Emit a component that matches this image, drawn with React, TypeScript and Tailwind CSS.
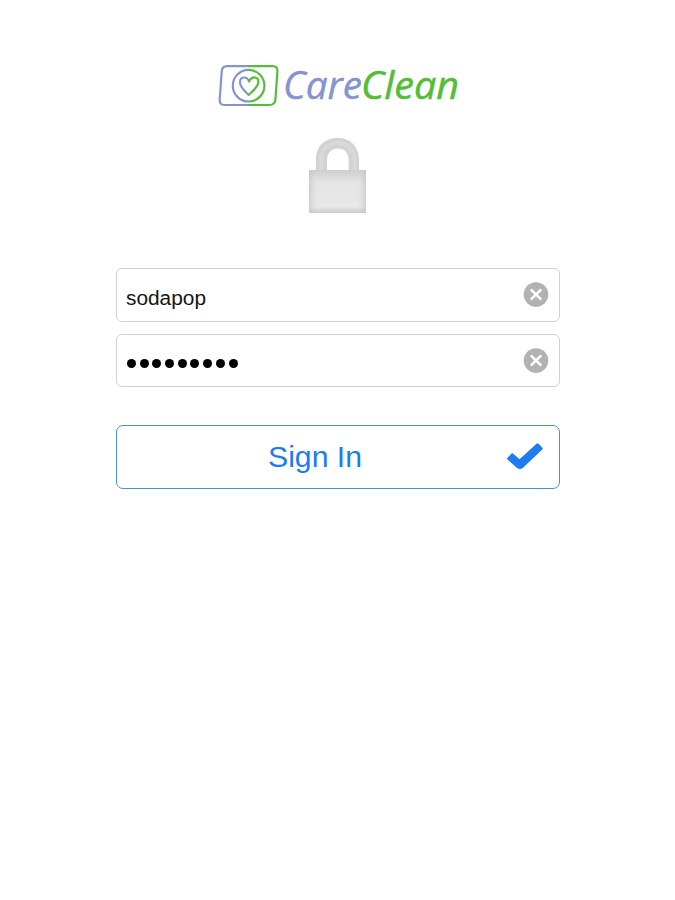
import React from "react";

function Logo() {
  return (
    <svg className="-mt-[6px] ml-[217px] block h-[62px] w-[250px] overflow-visible" viewBox="217 56 250 62" role="img" aria-label="CareClean">
      <defs>
        <linearGradient id="split" gradientUnits="userSpaceOnUse" x1="248" y1="0" x2="249" y2="0">
          <stop offset="0" stopColor="#8593cf" />
          <stop offset="1" stopColor="#52bd36" />
        </linearGradient>
      </defs>
      <g fill="none" stroke="url(#split)" strokeWidth="2.200">
        <path d="M227 66.200H272.500Q277.800 66.200 277.400 71.500L275.400 99.500Q275 105 269.500 105H224.500Q219.300 105 219.700 99.500L221.700 71.500Q222.100 66.200 227 66.200Z" />
        <circle cx="248.600" cy="85.700" r="15.800" />
        <path strokeLinejoin="round" d="M248.700 95C245.500 91.300 240 88 240 82.300C240 79 242 77.500 244.200 77.500C246.500 77.500 248.200 79 249 81.600C250.200 79 252 77.300 254.300 77.300C256.700 77.300 258.400 79.200 258.400 81.800C258.400 87 252.500 91 248.700 95Z" />
      </g>
      <g className="font-['Open_Sans','Noto_Sans',sans-serif] text-[38px] italic">
        <text x="283" y="98.500" fill="#8593cf" stroke="#8593cf" strokeWidth="0.400" textLength="79" lengthAdjust="spacingAndGlyphs">Care</text>
        <text x="361" y="98.500" fill="#52bd36" stroke="#52bd36" strokeWidth="0.500" textLength="98" lengthAdjust="spacingAndGlyphs">Clean</text>
      </g>
    </svg>
  );
}

function Lock() {
  return (
    <svg className="mt-[18px] ml-[307px] block h-[80px] w-[62px]" viewBox="307 136 62 80" aria-hidden="true">
      <defs>
        <linearGradient id="sides" x1="0" x2="1" y1="0" y2="0">
          <stop offset="0" stopColor="#c0c0c0" stopOpacity=".6" />
          <stop offset=".15" stopColor="#d8d8d8" stopOpacity="0" />
          <stop offset=".85" stopColor="#d8d8d8" stopOpacity="0" />
          <stop offset="1" stopColor="#c0c0c0" stopOpacity=".6" />
        </linearGradient>
        <linearGradient id="body" x1="0" x2="0" y1="0" y2="1">
          <stop offset="0" stopColor="#cecece" />
          <stop offset=".28" stopColor="#e4e4e4" />
          <stop offset=".85" stopColor="#e8e8e8" />
          <stop offset="1" stopColor="#cccccc" />
        </linearGradient>
      </defs>
      <path d="M316 171V160C316 146 325 138 337.500 138S359 146 359 160V171H348.700V161C348.700 153 345 148.500 338 148.500S327 153 327 161V171Z" fill="#d2d2d2" />
      <path d="M321 170V160C321 149 328 143 337.500 143S354.500 149 354.500 160V170" fill="none" stroke="#d9d9d9" strokeWidth="4" />
      <path d="M309 170H366V213H309Z" fill="url(#body)" />
      <path d="M309 170H366V213H309Z" fill="url(#sides)" />
    </svg>
  );
}

function ClearButton() {
  return (
    <button type="button" aria-label="Clear" className="mr-[10px] mb-px h-[25px] w-[26px]">
      <svg className="block h-[25px] w-[26px]" viewBox="0 0 26 25" aria-hidden="true">
        <circle cx="13" cy="12.500" r="12.300" fill="#b2b2b2" />
        <path d="M7.800 7.300L18.200 17.700M18.200 7.300L7.800 17.700" stroke="#fff" strokeWidth="2.500" />
      </svg>
    </button>
  );
}

export default function App() {
  return (
    <main className="flex h-[900px] w-[675px] flex-col bg-white pt-[62px] font-['Liberation_Sans',Arial,sans-serif]">
      <Logo />
      <Lock />
      <form className="mt-[52px] ml-[116px] flex w-[444px] flex-col">
        <div className="flex h-[54px] items-center justify-between rounded-[6px] border-[1.5px] border-[#d0d0d0]">
          <span className="pt-[5px] pl-[8.5px] text-[20px] leading-6 text-[#151515]">
            <svg className="block h-6 w-[84px] overflow-visible">
              <text x="0" y="19" fill="currentColor" textLength="80" lengthAdjust="spacingAndGlyphs">sodapop</text>
            </svg>
          </span>
          <ClearButton />
        </div>
        <div className="mt-[12px] flex h-[53px] items-center justify-between rounded-[6px] border-[1.5px] border-[#d0d0d0]">
          <div className="mt-[6px] ml-[10px] flex gap-[3.700px]" aria-label="Password">
            {Array.from({ length: 9 }, (_, i) => (
              <span key={i} className="h-[9px] w-[9px] rounded-full bg-black" />
            ))}
          </div>
          <ClearButton />
        </div>
        <button type="button" className="mt-[38px] flex h-[64px] items-center rounded-[7px] border-[1.300px] border-[#4a8fdf] text-[30px] text-[#1c7cf0]">
          <svg className="ml-[151px] block h-[40px] w-[96px] overflow-visible">
            <text x="0" y="30" fill="currentColor" textLength="94" lengthAdjust="spacingAndGlyphs">Sign In</text>
          </svg>
          <svg className="mr-[15px] ml-auto block h-[28px] w-[38px]" viewBox="506 442 38 28" aria-hidden="true">
            <path d="M507.300 457L511.500 452.600Q512.200 452 513 452.600L519.500 458.300L536.800 442.600Q537.800 441.900 538.600 442.700L542.400 446.800Q543 447.600 542.300 448.400L523 466.700Q519.600 469.300 516.500 466.600L507.500 458.500Q506.700 457.700 507.300 457Z" fill="#1c7cf0" />
          </svg>
        </button>
      </form>
    </main>
  );
}
